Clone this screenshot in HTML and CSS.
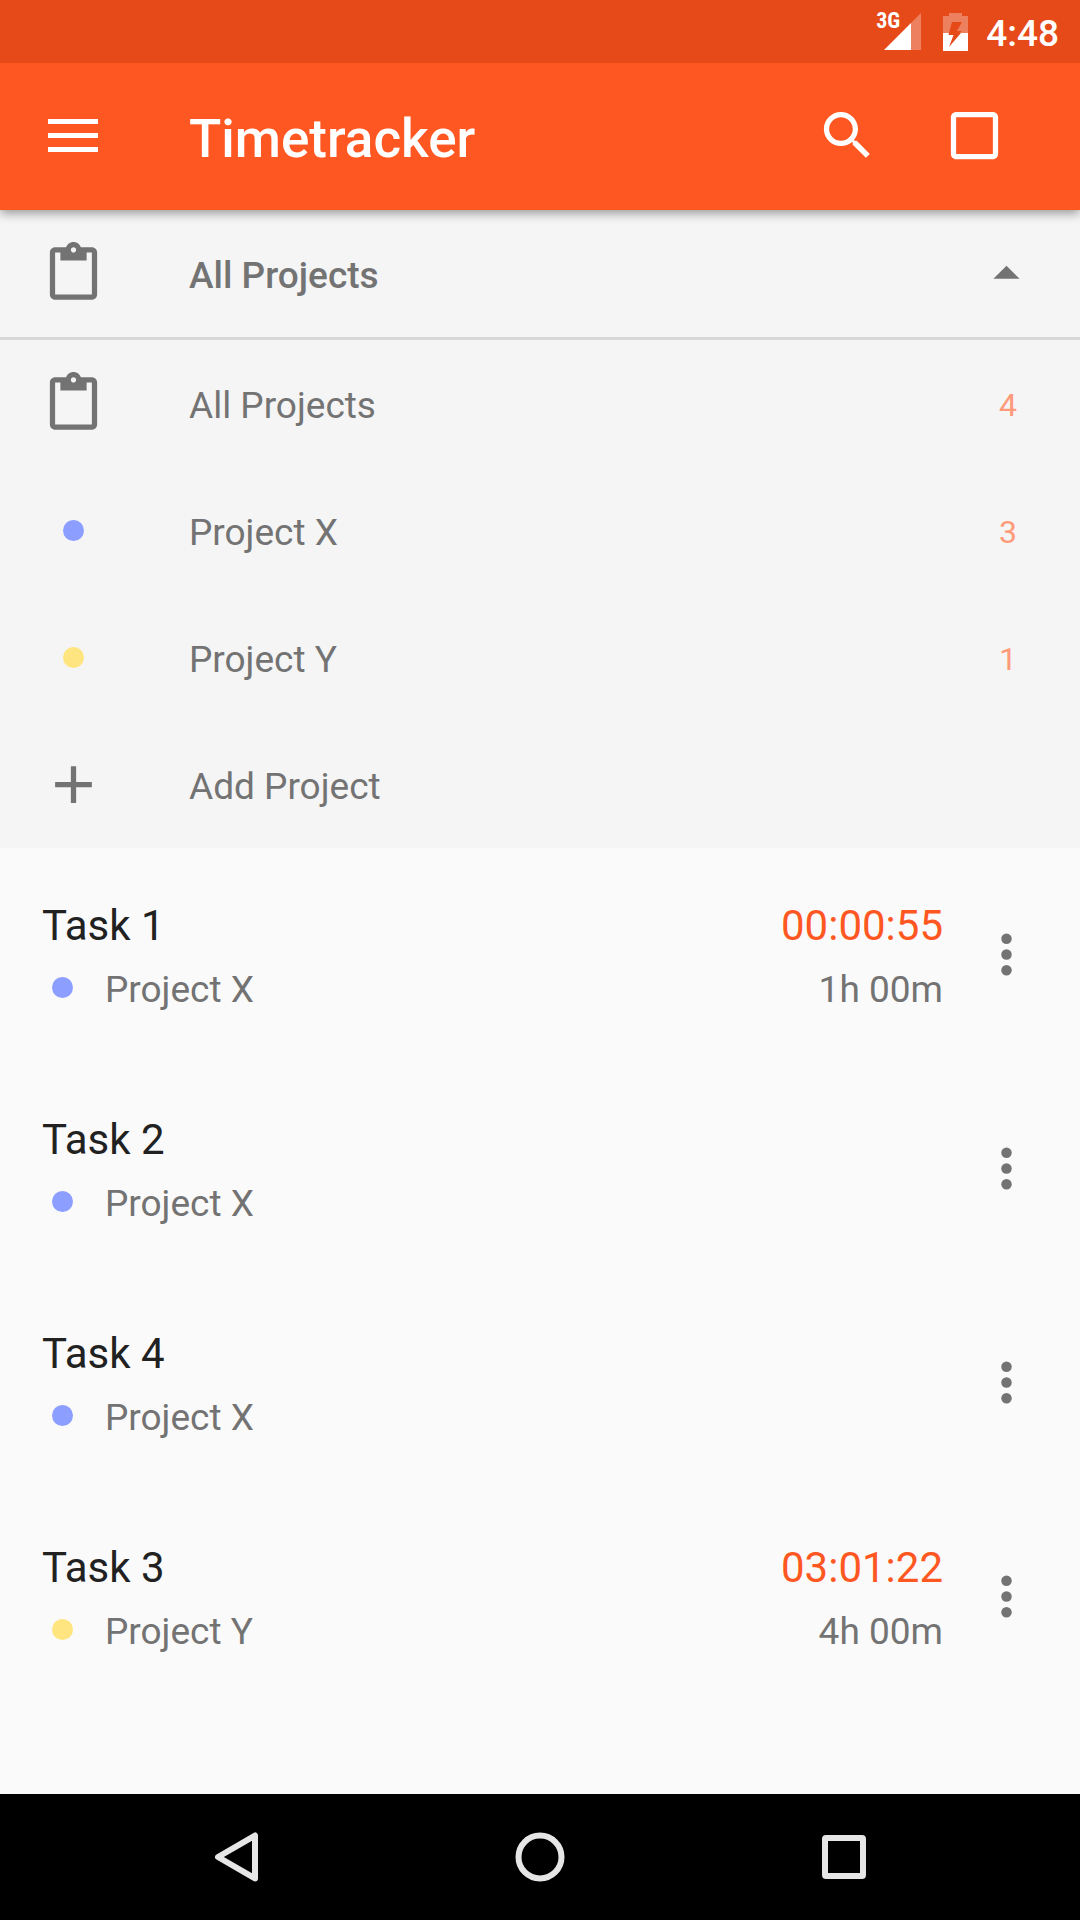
FILE: index.html
```html
<!DOCTYPE html>
<html lang="en">
<head>
<meta charset="utf-8">
<meta name="viewport" content="width=device-width, initial-scale=1">
<title>Timetracker</title>
<link rel="stylesheet" href="styles.css">
</head>
<body>
<svg class="defs" aria-hidden="true">
  <symbol id="clipboard" viewBox="0 0 24 24"><path d="M19 2h-4.180C14.400.840 13.300 0 12 0c-1.300 0-2.400.840-2.820 2H5c-1.100 0-2 .900-2 2v16c0 1.100.900 2 2 2h14c1.100 0 2-.900 2-2V4c0-1.100-.900-2-2-2zm-7 0c.550 0 1 .450 1 1s-.450 1-1 1-1-.450-1-1 .450-1 1-1zm7 18H5V4h2v3h10V4h2v16z"/></symbol>
  <symbol id="more" viewBox="0 0 24 24"><circle cx="12" cy="6" r="2"/><circle cx="12" cy="12" r="2"/><circle cx="12" cy="18" r="2"/></symbol>
</svg>
<div class="screen">
  <div class="status">
    <div class="signal">
      <span class="network">3G</span>
      <svg class="bars" viewBox="0 0 37 37"><path d="M37 0V37H27V10z" opacity=".3"/><path d="M0 37L27 10V37z"/></svg>
    </div>
    <svg class="battery" viewBox="0 0 25 38"><path d="M6 0h13v3h6v17h-9l3-2h-5l5-9H9L6 20H0V3h6z" opacity=".3"/><path d="M0 20h6l-0.500 2h5L6 34 18 20h7v18H0z"/></svg>
    <time class="clock">4:48</time>
  </div>
  <header class="appbar">
    <button class="icon-btn" aria-label="Menu"><svg class="icon" viewBox="0 0 63 63"><path d="M6 15h50v5H6zM6 29h50v5H6zM6 43h50v5H6z"/></svg></button>
    <h1 class="title">Timetracker</h1>
    <button class="icon-btn" aria-label="Search"><svg class="icon" viewBox="0 0 24 24"><path d="M15.500 14h-.790l-.280-.270C15.410 12.590 16 11.110 16 9.500 16 5.910 13.090 3 9.500 3S3 5.910 3 9.500 5.910 16 9.500 16c1.610 0 3.090-.590 4.230-1.570l.270.280v.790l5 4.990L20.490 19l-4.990-5zm-6 0C7.010 14 5 11.990 5 9.500S7.010 5 9.500 5 14 7.010 14 9.500 11.990 14 9.500 14z"/></svg></button>
    <button class="icon-btn" aria-label="Select tasks"><svg class="icon" viewBox="0 0 24 24"><path d="M19 5v14H5V5h14m0-2H5c-1.100 0-2 .900-2 2v14c0 1.100.900 2 2 2h14c1.100 0 2-.900 2-2V5c0-1.100-.900-2-2-2z"/></svg></button>
  </header>
  <section class="projects">
    <button class="row row-current" aria-expanded="true">
      <svg class="icon"><use href="#clipboard"/></svg>
      <span class="label">All Projects</span>
      <svg class="icon" viewBox="0 0 24 24"><path d="M7 14l5-5 5 5z"/></svg>
    </button>
    <button class="row">
      <svg class="icon"><use href="#clipboard"/></svg>
      <span class="label">All Projects</span><span class="count">4</span>
    </button>
    <button class="row">
      <span class="icon"><i class="dot blue"></i></span>
      <span class="label">Project X</span><span class="count">3</span>
    </button>
    <button class="row">
      <span class="icon"><i class="dot yellow"></i></span>
      <span class="label">Project Y</span><span class="count">1</span>
    </button>
    <button class="row">
      <svg class="icon" viewBox="0 0 24 24"><path d="M19 13h-6v6h-2v-6H5v-2h6V5h2v6h6v2z"/></svg>
      <span class="label">Add Project</span>
    </button>
  </section>
  <main class="tasks">
    <article class="task">
      <div class="info"><h2 class="name">Task 1</h2><p class="meta"><i class="dot blue"></i>Project X</p></div>
      <div class="times"><p class="name elapsed">00:00:55</p><p class="meta">1h 00m</p></div>
      <button class="icon-btn muted" aria-label="Task 1 options"><svg class="icon"><use href="#more"/></svg></button>
    </article>
    <article class="task">
      <div class="info"><h2 class="name">Task 2</h2><p class="meta"><i class="dot blue"></i>Project X</p></div>
      <button class="icon-btn muted" aria-label="Task 2 options"><svg class="icon"><use href="#more"/></svg></button>
    </article>
    <article class="task">
      <div class="info"><h2 class="name">Task 4</h2><p class="meta"><i class="dot blue"></i>Project X</p></div>
      <button class="icon-btn muted" aria-label="Task 4 options"><svg class="icon"><use href="#more"/></svg></button>
    </article>
    <article class="task">
      <div class="info"><h2 class="name">Task 3</h2><p class="meta"><i class="dot yellow"></i>Project Y</p></div>
      <div class="times"><p class="name elapsed">03:01:22</p><p class="meta">4h 00m</p></div>
      <button class="icon-btn muted" aria-label="Task 3 options"><svg class="icon"><use href="#more"/></svg></button>
    </article>
  </main>
  <nav class="navbar">
    <button class="nav-btn" aria-label="Back"><svg class="nav-icon" viewBox="0 0 64 64"><path d="M51 10.500V53.500L14 32z"/></svg></button>
    <button class="nav-btn" aria-label="Home"><svg class="nav-icon" viewBox="0 0 64 64"><circle cx="32" cy="32" r="21.500"/></svg></button>
    <button class="nav-btn" aria-label="Recent apps"><svg class="nav-icon" viewBox="0 0 64 64"><rect x="13" y="13" width="38" height="38" rx="1"/></svg></button>
  </nav>
</div>
</body>
</html>
```
FILE: styles.css
```css
* { box-sizing: border-box; }

body {
  margin: 0;
  background: #fafafa;
  color: #212121;
  font-family: Roboto, "Noto Sans", sans-serif;
  font-size: 37px;
}

h1, h2, p { margin: 0; font-weight: 400; }

button {
  padding: 0;
  border: 0;
  background: none;
  color: inherit;
  font: inherit;
  cursor: pointer;
}

.defs { position: absolute; width: 0; height: 0; }

.screen {
  display: flex;
  flex-direction: column;
  min-height: 100vh;
}

.icon {
  display: flex;
  flex: none;
  align-items: center;
  justify-content: center;
  width: 63px;
  height: 63px;
  fill: currentColor;
}

.icon-btn { flex: none; }
.muted { color: #737373; }

.status {
  position: relative;
  z-index: 1;
  display: flex;
  align-items: center;
  justify-content: flex-end;
  height: 63px;
  padding-right: 21px;
  background: #e64a19;
  color: #fff;
  fill: currentColor;
}

.signal { position: relative; margin-right: 22px; }

.network {
  position: absolute;
  top: -4px;
  right: 21px;
  font: 700 22px/24px "Roboto Condensed", Roboto, sans-serif;
}

.bars { display: block; width: 37px; height: 37px; }
.battery { width: 25px; height: 38px; margin-right: 18px; }
.clock { padding-top: 3px; font-weight: 500; }

.appbar {
  position: relative;
  display: flex;
  align-items: center;
  gap: 64px;
  height: 147px;
  padding: 0 74px 2px 42px;
  background: #ff5722;
  color: #fff;
  box-shadow: 0 3px 10px rgba(0, 0, 0, .4);
}

.title {
  flex: 1;
  padding: 7px 0 0 20px;
  font-size: 53px;
  font-weight: 500;
}

.projects { background: #f5f5f5; color: #737373; }

.row {
  display: flex;
  align-items: center;
  width: 100%;
  height: 127px;
  padding: 0 42px;
  text-align: left;
}

.row-current {
  height: 130px;
  border-bottom: 3px solid #d8d8d8;
  font-weight: 500;
}

.label { flex: 1; padding: 4px 0 0 84px; }

.count {
  padding: 2px 21px 0 0;
  color: #ff9a7a;
  font-size: 32px;
}

.dot {
  display: block;
  width: 21px;
  height: 21px;
  border-radius: 50%;
}

.blue { background: #8c9eff; }
.yellow { background: #ffe57f; }

.tasks { flex: 1; }

.task {
  display: flex;
  align-items: center;
  height: 214px;
  padding: 0 42px 2px;
}

.info { flex: 1; }
.info, .times { padding-top: 8px; }
.times { margin-right: 32px; text-align: right; }
.name { font-size: 42px; line-height: 64px; }
.elapsed { color: #ff5722; }

.meta {
  display: flex;
  align-items: center;
  justify-content: flex-end;
  color: #737373;
  line-height: 64px;
}

.info .meta { justify-content: flex-start; }
.meta .dot { margin: 0 32px 5px 10px; }

.navbar {
  display: flex;
  align-items: center;
  justify-content: center;
  gap: 240px;
  height: 126px;
  background: #000;
}

.nav-icon {
  display: block;
  width: 64px;
  height: 64px;
  fill: none;
  stroke: #e6e6e6;
  stroke-width: 6;
  stroke-linejoin: round;
}
```
